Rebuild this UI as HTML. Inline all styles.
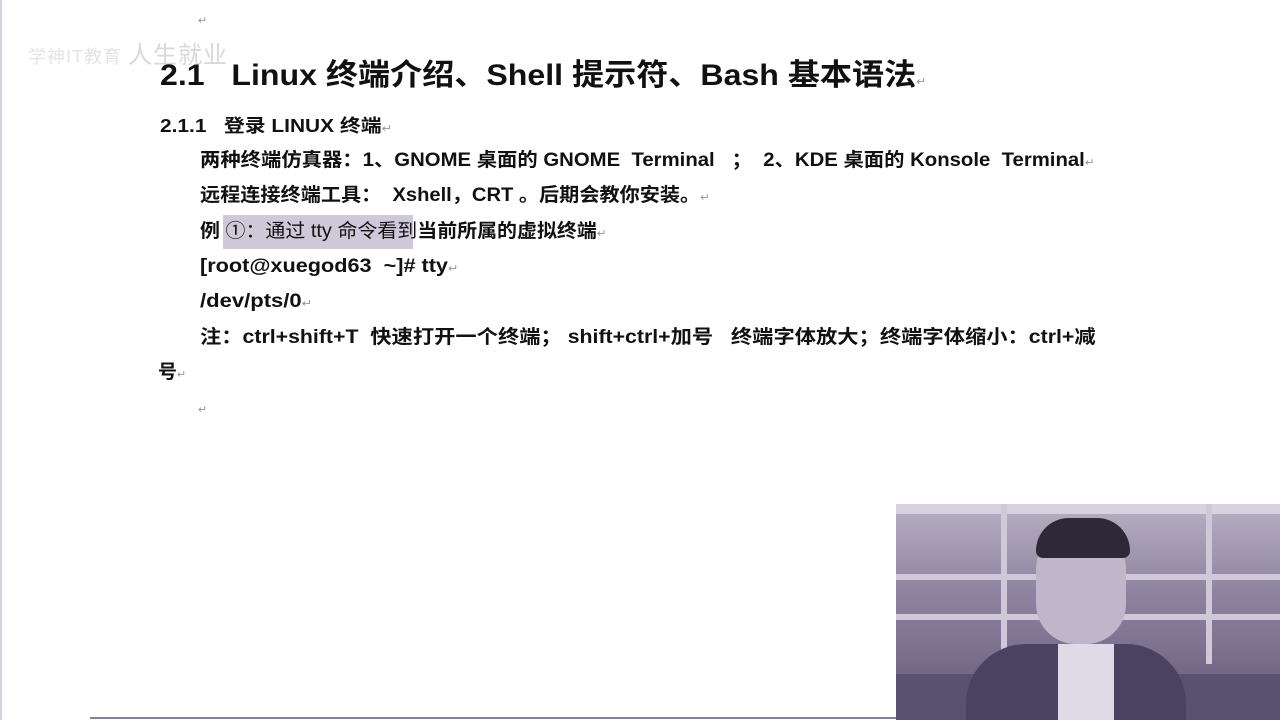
<!DOCTYPE html>
<html><head><meta charset="utf-8"><style>
body{margin:0;width:1280px;height:720px;background:#fff;position:relative;overflow:hidden;font-family:"Liberation Sans","Noto Sans CJK SC",sans-serif;color:#111;font-weight:bold}
.l{position:absolute;white-space:nowrap;font-size:19px;line-height:24px;transform-origin:0 50%}
.m{color:#9a90a8;font-weight:normal;font-size:11px}
.vid{position:absolute;left:896px;top:504px;width:384px;height:216px;background:linear-gradient(180deg,#b8b0c4 0%,#8e84a0 40%,#7a708e 70%,#5e5472 100%);overflow:hidden}
</style></head><body>
<div style="position:absolute;left:0;top:0;width:2px;height:720px;background:#d8d2e0"></div>
<div style="position:absolute;left:90px;top:717px;width:806px;height:2px;background:#8a809a"></div>
<div style="position:absolute;left:28px;top:35px;font-size:18px;color:#e4e4e4;font-weight:normal;letter-spacing:1px">学神IT教育 <span style="color:#d8d8d8;font-size:24px">人生就业</span></div>
<div class="m" style="position:absolute;left:198px;top:14px">↵</div>
<div class="l" style="left:160px;top:58px;font-size:30px;line-height:36px;transform:scaleX(1.07)">2.1&nbsp;&nbsp;&nbsp;Linux 终端介绍、Shell 提示符、Bash 基本语法<span class="m">↵</span></div>
<div class="l" style="left:160px;top:114px;font-size:18px;transform:scaleX(1.16)">2.1.1&nbsp;&nbsp;&nbsp;登录 LINUX 终端<span class="m">↵</span></div>
<div class="l" style="left:200px;top:149px;transform:scaleX(1.07)">两种终端仿真器：1、GNOME 桌面的 GNOME&nbsp; Terminal&nbsp;&nbsp; ；&nbsp; 2、KDE 桌面的 Konsole&nbsp; Terminal<span class="m">↵</span></div>
<div class="l" style="left:200px;top:184px;transform:scaleX(1.06)">远程连接终端工具：&nbsp; Xshell，CRT 。后期会教你安装。<span class="m">↵</span></div>
<div style="position:absolute;left:223px;top:215px;width:190px;height:34px;background:#cfc8d8"></div>
<div class="l" style="left:200px;top:220px;transform:scaleX(1.05)">例 <span style="font-weight:normal">①：通过 tty 命令看到</span>当前所属的虚拟终端<span class="m">↵</span></div>
<div class="l" style="left:200px;top:255px;transform:scaleX(1.14)">[root@xuegod63&nbsp; ~]# tty<span class="m">↵</span></div>
<div class="l" style="left:200px;top:290px;transform:scaleX(1.16)">/dev/pts/0<span class="m">↵</span></div>
<div class="l" style="left:200px;top:326px;transform:scaleX(1.12)">注：ctrl+shift+T&nbsp; 快速打开一个终端； shift+ctrl+加号&nbsp;&nbsp; 终端字体放大；终端字体缩小：ctrl+减</div>
<div class="l" style="left:158px;top:361px">号<span class="m">↵</span></div>
<div class="m" style="position:absolute;left:198px;top:403px">↵</div>
<div class="vid">
<div style="position:absolute;left:0;top:0;width:384px;height:10px;background:#d8d2e0"></div>
<div style="position:absolute;left:0;top:70px;width:384px;height:6px;background:#cfc8d8"></div>
<div style="position:absolute;left:0;top:110px;width:384px;height:6px;background:#cfc8d8"></div>
<div style="position:absolute;left:105px;top:0;width:6px;height:160px;background:#cfc8d8"></div>
<div style="position:absolute;left:310px;top:0;width:6px;height:160px;background:#cfc8d8"></div>
<div style="position:absolute;left:0;top:170px;width:384px;height:46px;background:#5a5070"></div>
<div style="position:absolute;left:140px;top:20px;width:90px;height:120px;border-radius:45px 45px 40px 40px;background:#bfb6ca"></div>
<div style="position:absolute;left:140px;top:14px;width:94px;height:40px;border-radius:47px 47px 10px 10px;background:#2e2838"></div>
<div style="position:absolute;left:70px;top:140px;width:220px;height:90px;border-radius:60px 60px 0 0;background:#4a4260"></div>
<div style="position:absolute;left:162px;top:140px;width:56px;height:80px;background:#e0dae6"></div>
</div>
</body></html>
